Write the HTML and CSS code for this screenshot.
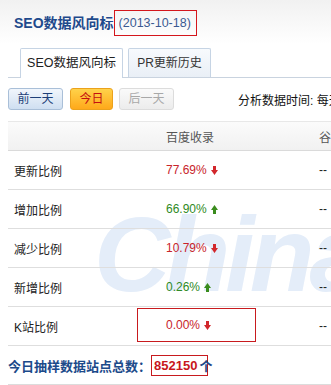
FILE: index.html
```html
<!DOCTYPE html>
<html lang="zh">
<head>
<meta charset="utf-8">
<link rel="stylesheet" href="styles.css">
</head>
<body>
<div class="page">
  <div class="title-row">
    <h1 class="title">SEO数据风向标</h1>
    <span class="date">(2013-10-18)</span>
  </div>

  <div class="tabs">
    <div class="tab active">SEO数据风向标</div>
    <div class="tab">PR更新历史</div>
  </div>

  <div class="toolbar">
    <span class="btn btn-prev">前一天</span>
    <span class="btn btn-today">今日</span>
    <span class="btn btn-next">后一天</span>
    <span class="analysis">分析数据时间: 每天更新</span>
  </div>

  <div class="table">
    <div class="watermark">China</div>
    <div class="row head">
      <div class="c1"></div>
      <div class="c2">百度收录</div>
      <div class="c3">谷歌收录</div>
    </div>
    <div class="row">
      <div class="c1">更新比例</div>
      <div class="c2 down">77.69% <svg class="arr" viewBox="0 0 7 9"><path d="M2 0h3v4h2L3.5 9 0 4h2z"/></svg></div>
      <div class="c3">--</div>
    </div>
    <div class="row">
      <div class="c1">增加比例</div>
      <div class="c2 up">66.90% <svg class="arr" viewBox="0 0 7 9"><path d="M2 9h3V5h2L3.5 0 0 5h2z"/></svg></div>
      <div class="c3">--</div>
    </div>
    <div class="row">
      <div class="c1">减少比例</div>
      <div class="c2 down">10.79% <svg class="arr" viewBox="0 0 7 9"><path d="M2 0h3v4h2L3.5 9 0 4h2z"/></svg></div>
      <div class="c3">--</div>
    </div>
    <div class="row">
      <div class="c1">新增比例</div>
      <div class="c2 up">0.26% <svg class="arr" viewBox="0 0 7 9"><path d="M2 9h3V5h2L3.5 0 0 5h2z"/></svg></div>
      <div class="c3">--</div>
    </div>
    <div class="row">
      <div class="c1">K站比例</div>
      <div class="c2 down boxed"><span class="boxval">0.00% <svg class="arr" viewBox="0 0 7 9"><path d="M2 0h3v4h2L3.5 9 0 4h2z"/></svg></span></div>
      <div class="c3">--</div>
    </div>
    <div class="footer">
      <span class="ftext">今日抽样数据站点总数：</span><span class="num">852150</span><span class="unit">个</span>
    </div>
  </div>
</div>
</body>
</html>
```

FILE: styles.css
```css
html, body {
  margin: 0;
  padding: 0;
  background: #fff;
}
body {
  font-family: "Liberation Sans", "Noto Sans CJK SC", sans-serif;
  font-size: 12px;
  color: #222;
}
.page {
  width: 331px;
  height: 385px;
  overflow: hidden;
  padding-left: 8px;
  box-sizing: border-box;
  background: linear-gradient(#f1f1f1 0px, #ffffff 44px) no-repeat;
}
.title-row {
  display: flex;
  align-items: center;
  padding-top: 10px;
  padding-left: 6px;
  height: 26px;
}
.title {
  margin: 0;
  font-size: 14px;
  font-weight: bold;
  color: #1f4a8c;
  line-height: 26px;
  white-space: nowrap;
}
.date {
  border: 1px solid #d4161c;
  height: 24px;
  line-height: 25px;
  padding: 0 5px 0 4px;
  font-size: 12.5px;
  color: #3b5a92;
  white-space: nowrap;
}
.tabs {
  display: flex;
  gap: 5px;
  margin-top: 12px;
  padding-left: 12px;
  border-bottom: 1px solid #c9d3df;
  width: 400px;
  height: 29px;
}
.tab {
  flex-shrink: 0;
  box-sizing: border-box;
  height: 29px;
  border: 1px solid #c6d4e4;
  border-bottom: none;
  border-radius: 2px 2px 0 0;
  text-align: center;
  line-height: 29px;
  font-size: 12px;
  color: #333;
  background: linear-gradient(#f7fafd, #e9eff6);
  width: 83px;
}
.tab.active {
  width: 103px;
  height: 30px;
  background: #fff;
  color: #222;
  font-size: 12.5px;
}
.toolbar {
  display: flex;
  align-items: center;
  margin-top: 10px;
  height: 22px;
  white-space: nowrap;
}
.btn {
  flex-shrink: 0;
  box-sizing: border-box;
  height: 22px;
  line-height: 20px;
  text-align: center;
  border-radius: 3px;
  font-size: 12px;
}
.btn-prev {
  width: 55px;
  border: 1px solid #a9bfd8;
  background: linear-gradient(#f1f6fc, #cfdff1);
  color: #1d3f78;
}
.btn-today {
  width: 43px;
  margin-left: 7px;
  border: 1px solid #eba21c;
  background: linear-gradient(#ffd24a, #ffa91a);
  color: #c41010;
}
.btn-next {
  width: 55px;
  margin-left: 6px;
  border: 1px solid #dcdcdc;
  background: linear-gradient(#fafafa, #ececec);
  color: #a8a8a8;
}
.analysis {
  flex-shrink: 0;
  margin-left: 64px;
  color: #111;
  font-size: 12px;
}
.table {
  position: relative;
  margin-top: 11px;
  width: 420px;
}
.watermark {
  position: absolute;
  left: 86px;
  top: 80px;
  font-size: 106px;
  line-height: 106px;
  font-weight: bold;
  font-style: italic;
  letter-spacing: -5px;
  color: #e4edf9;
  z-index: 0;
  white-space: nowrap;
}
.row {
  position: relative;
  z-index: 1;
  display: grid;
  grid-template-columns: 129px 119px 1fr;
  height: 39px;
  box-sizing: border-box;
  border-bottom: 1px solid #dedede;
  align-items: center;
}
.row.head {
  height: 30px;
  border-top: 1px solid #e8e8e8;
  border-bottom: 1px solid #dadada;
  background: linear-gradient(#fbfbfb, #f1f1f1);
  color: #555;
}
.c1 {
  padding-left: 6px;
  white-space: nowrap;
}
.c2 {
  padding-left: 29px;
  white-space: nowrap;
  font-size: 12px;
  display: flex;
  align-items: center;
  height: 100%;
}
.c3 {
  padding-left: 63px;
  white-space: nowrap;
}
.down { color: #c8242b; }
.up { color: #2f8a25; }
.down .arr { fill: #d2272c; }
.up .arr { fill: #3a8c1d; }
.arr {
  width: 7px;
  height: 9px;
  margin-left: 4px;
}
.c2 .arr { display: inline-block; }
.boxed {
  padding-left: 0;
  align-items: flex-start;
}
.boxval {
  box-sizing: border-box;
  width: 119px;
  height: 34px;
  margin-top: 1px;
  border: 1px solid #c81a1e;
  padding-left: 28px;
  display: flex;
  align-items: center;
}
.footer {
  position: relative;
  z-index: 1;
  display: flex;
  align-items: center;
  height: 39px;
  box-sizing: border-box;
  border-bottom: 1px solid #dcdcdc;
  font-size: 13px;
  font-weight: bold;
  color: #1c4a8a;
  white-space: nowrap;
}
.num {
  box-sizing: border-box;
  height: 21px;
  line-height: 20px;
  border: 1px solid #c81a1e;
  padding: 0 10px 0 2px;
  color: #c8161c;
  font-size: 13px;
}
.unit {
  margin-left: -9px;
}
```
